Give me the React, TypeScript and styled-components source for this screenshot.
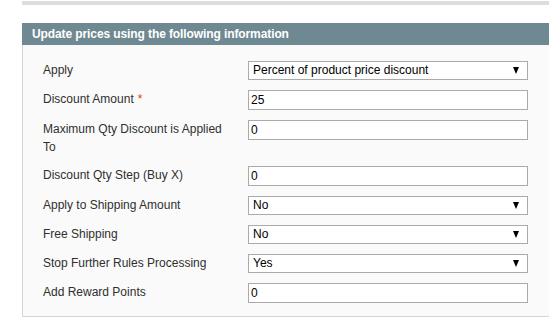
import React from "react";
import styled, { createGlobalStyle } from "styled-components";

const GlobalStyle = createGlobalStyle`
  html, body {
    margin: 0;
    padding: 0;
    background: #fff;
    overflow: hidden;
    width: 549px;
    height: 328px;
  }
  body {
    font-family: "Liberation Sans", Arial, sans-serif;
  }
`;

const Page = styled.div`
  box-sizing: border-box;
  width: 549px;
  height: 328px;
  overflow: hidden;
  padding-top: 1px;
  padding-left: 22px;
`;

const TopStrip = styled.div`
  width: 540px;
  height: 4px;
  background: #dddddd;
  margin-bottom: 18px;
`;

const Fieldset = styled.div`
  width: 540px;
`;

const Legend = styled.div`
  height: 22px;
  line-height: 22px;
  background: #6f8992;
  color: #fff;
  font-size: 12px;
  font-weight: bold;
  letter-spacing: -0.1px;
  padding-left: 10px;
`;

const Body = styled.div`
  background: #fafafa;
  border-left: 1px solid #d6d6d6;
  border-bottom: 1px solid #d6d6d6;
  padding: 16px 0 13px 20px;
  display: flex;
  flex-direction: column;
  gap: 10px;
`;

const Row = styled.div`
  display: grid;
  grid-template-columns: 185px 280px;
  column-gap: 20px;
  align-items: start;
`;

const Label = styled.label`
  font-size: 12px;
  line-height: 18px;
  color: #2f2f2f;
`;

const Required = styled.span`
  color: #eb340a;
  margin-left: 4px;
`;

const TextInput = styled.div`
  box-sizing: border-box;
  height: 20px;
  border: 1px solid #aaaaaa;
  background: #fff;
  font-size: 12px;
  line-height: 18px;
  padding-left: 2px;
  color: #000;
`;

const Select = styled.div`
  box-sizing: border-box;
  height: 19px;
  border: 1px solid #aaaaaa;
  background: #fff;
  font-size: 12px;
  line-height: 17px;
  padding: 0 8px 0 4px;
  color: #000;
  display: flex;
  justify-content: space-between;
  align-items: center;
`;

const Arrow = styled.span`
  width: 0;
  height: 0;
  border-left: 3.5px solid transparent;
  border-right: 3.5px solid transparent;
  border-top: 7px solid #000;
`;

type Field = {
  label: string;
  value: string;
  kind: "select" | "input";
  required?: boolean;
};

const fields: Field[] = [
  { label: "Apply", value: "Percent of product price discount", kind: "select" },
  { label: "Discount Amount", value: "25", kind: "input", required: true },
  { label: "Maximum Qty Discount is Applied To", value: "0", kind: "input" },
  { label: "Discount Qty Step (Buy X)", value: "0", kind: "input" },
  { label: "Apply to Shipping Amount", value: "No", kind: "select" },
  { label: "Free Shipping", value: "No", kind: "select" },
  { label: "Stop Further Rules Processing", value: "Yes", kind: "select" },
  { label: "Add Reward Points", value: "0", kind: "input" },
];

export default function App() {
  return (
    <>
      <GlobalStyle />
      <Page>
        <TopStrip />
        <Fieldset>
          <Legend>Update prices using the following information</Legend>
          <Body>
            {fields.map((f) => (
              <Row key={f.label}>
                <Label>
                  {f.label}
                  {f.required && <Required>*</Required>}
                </Label>
                {f.kind === "select" ? (
                  <Select>
                    <span>{f.value}</span>
                    <Arrow />
                  </Select>
                ) : (
                  <TextInput>{f.value}</TextInput>
                )}
              </Row>
            ))}
          </Body>
        </Fieldset>
      </Page>
    </>
  );
}
